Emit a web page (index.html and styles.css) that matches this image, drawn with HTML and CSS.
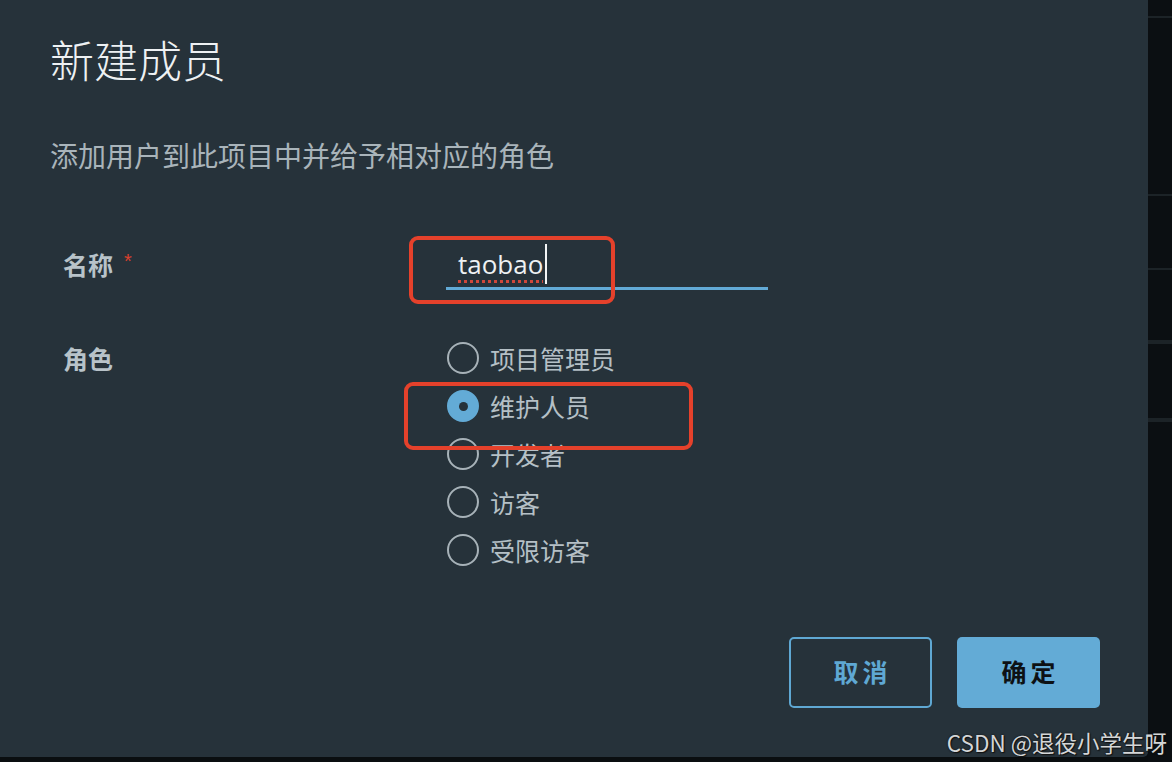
FILE: index.html
```html
<!DOCTYPE html>
<html lang="zh-CN">
<head>
<meta charset="utf-8">
<title>新建成员</title>
<link rel="stylesheet" href="styles.css">
</head>
<body>
<div class="screen">
  <div class="dialog">
    <h1 class="title">新建成员</h1>
    <p class="subtitle">添加用户到此项目中并给予相对应的角色</p>
    <div class="form">
      <div class="label">名称<span class="req">*</span></div>
      <div class="field">
        <div class="input"><span class="typed">taobao</span><span class="caret"></span></div>
      </div>
      <div class="label label-role">角色</div>
      <div class="radios">
        <div class="radio"><span class="dot"></span><span class="rtext">项目管理员</span></div>
        <div class="radio checked"><span class="dot"></span><span class="rtext">维护人员</span></div>
        <div class="radio"><span class="dot"></span><span class="rtext">开发者</span></div>
        <div class="radio"><span class="dot"></span><span class="rtext">访客</span></div>
        <div class="radio"><span class="dot"></span><span class="rtext">受限访客</span></div>
      </div>
    </div>
    <div class="footer">
      <button class="btn btn-outline">取消</button>
      <button class="btn btn-primary">确定</button>
    </div>
    <div class="mark mark-name"></div>
    <div class="mark mark-role"></div>
  </div>
  <div class="side">
    <div class="seg seg1"></div>
    <div class="seg seg2"></div>
    <div class="seg seg3"></div>
    <div class="seg seg4"></div>
    <div class="seg seg5"></div>
    <div class="seg seg6"></div>
  </div>
</div>
<div class="watermark">CSDN @退役小学生呀</div>
</body>
</html>
```
FILE: styles.css
```css
* { box-sizing: border-box; }
html, body {
  margin: 0;
  padding: 0;
  background: #0a0e10;
  width: 1172px;
  height: 762px;
  overflow: hidden;
  font-family: "Noto Sans CJK SC", "Noto Sans", sans-serif;
}
.screen {
  display: flex;
  align-items: flex-start;
  height: 762px;
}
.dialog {
  position: relative;
  width: 1148px;
  height: 757px;
  background: #26323a;
  border-bottom-right-radius: 5px;
  padding: 33px 48px 49px 50px;
  display: flex;
  flex-direction: column;
}
.title {
  margin: 0;
  font-size: 44px;
  line-height: 52px;
  font-weight: 300;
  color: #eef1f3;
}
.subtitle {
  margin: 52px 0 0;
  font-size: 28px;
  line-height: 36px;
  color: #a9b4ba;
}
.form {
  margin: 73px 0 0 13px;
  display: grid;
  grid-template-columns: 383px 1fr;
  row-gap: 44px;
  align-items: start;
}
.label {
  font-size: 25px;
  line-height: 36px;
  font-weight: 700;
  color: #b8c3c9;
  display: flex;
  align-items: center;
}
.label-role { margin-top: 6px; }
.req {
  color: #d9402d;
  font-size: 20px;
  margin-left: 11px;
  margin-top: -6px;
  font-weight: 400;
  font-family: "Liberation Sans", sans-serif;
}
.input {
  width: 322px;
  height: 44px;
  padding: 0 0 5px 12px;
  border-bottom: 3px solid #62aad6;
  display: flex;
  align-items: center;
}
.typed {
  font-family: "Open Sans", "Liberation Sans", sans-serif;
  font-size: 26px;
  line-height: 36px;
  color: #eef1f3;
  text-decoration: underline dotted #d0473a;
  text-decoration-thickness: 3px;
  text-underline-offset: 6px;
}
.caret {
  width: 2px;
  height: 40px;
  background: #f2f4f5;
  margin-left: 2px;
}
.radios {
  display: flex;
  flex-direction: column;
  margin-top: 0;
}
.radio {
  height: 48px;
  display: flex;
  align-items: center;
  gap: 11px;
}
.dot {
  width: 32px;
  height: 32px;
  margin-left: 1px;
  border-radius: 50%;
  border: 2px solid #a7b2b8;
  display: flex;
  align-items: center;
  justify-content: center;
}
.checked .dot {
  border-color: #63abd6;
  background: #63abd6;
}
.checked .dot::after {
  content: "";
  width: 9px;
  height: 9px;
  border-radius: 50%;
  background: #26323a;
}
.rtext {
  font-size: 25px;
  line-height: 36px;
  color: #b5c0c6;
}
.footer {
  margin-top: auto;
  display: flex;
  justify-content: flex-end;
  gap: 25px;
}
.btn {
  width: 143px;
  height: 71px;
  border-radius: 5px;
  font-family: "Noto Sans CJK SC", sans-serif;
  font-size: 25px;
  font-weight: 700;
  letter-spacing: 4px;
  padding: 0 0 4px 4px;
  cursor: pointer;
}
.btn-outline {
  background: transparent;
  border: 2px solid #5fa8d3;
  color: #5fa8d3;
}
.btn-primary {
  background: #63abd6;
  border: none;
  color: #0d1114;
}
.mark {
  position: absolute;
  border: 4px solid #e5412b;
  border-radius: 9px;
}
.mark-name { left: 409px; top: 236px; width: 206px; height: 68px; }
.mark-role { left: 404px; top: 382px; width: 289px; height: 68px; }
.side {
  width: 24px;
  height: 762px;
  background: #0b0f12;
  display: flex;
  flex-direction: column;
}
.seg { border-bottom: 2px solid #1c2327; }
.seg1 { height: 18px; }
.seg2 { height: 178px; }
.seg3 { height: 74px; }
.seg4 { height: 74px; border-bottom-width: 4px; }
.seg5 { height: 76px; }
.watermark {
  position: absolute;
  right: 5px;
  bottom: 5px;
  font-family: "Noto Sans CJK SC", "Liberation Sans", sans-serif;
  font-size: 22.5px;
  line-height: 30px;
  color: #d4d6d7;
  text-shadow: 0 0 2px #111, 1px 1px 1px #111;
}
```
